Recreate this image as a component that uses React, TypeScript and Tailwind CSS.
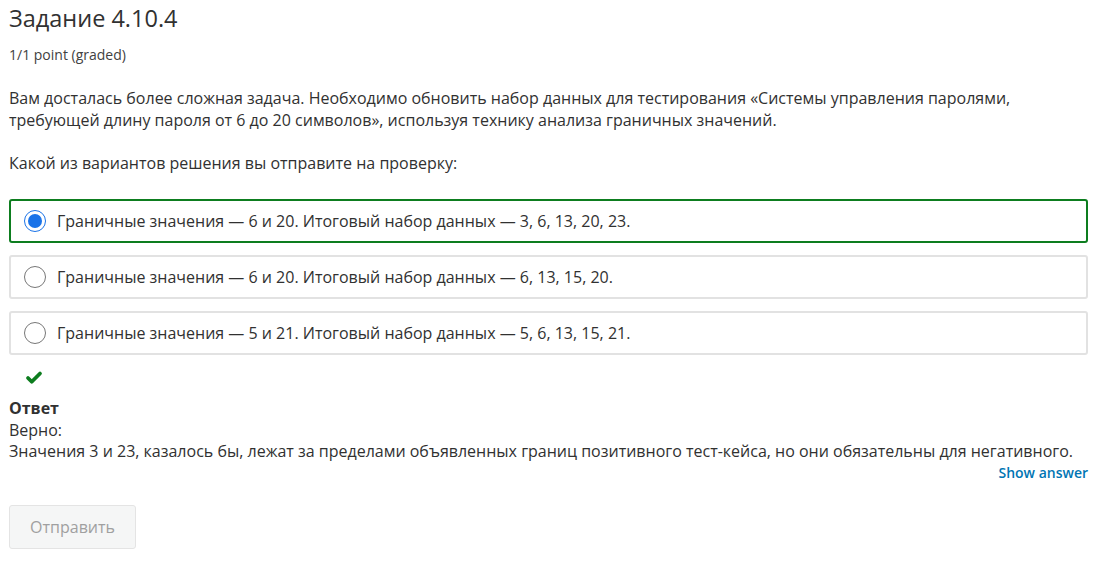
import { Check } from "lucide-react";

const options = [
  "Граничные значения — 6 и 20. Итоговый набор данных — 3, 6, 13, 20, 23.",
  "Граничные значения — 6 и 20. Итоговый набор данных — 6, 13, 15, 20.",
  "Граничные значения — 5 и 21. Итоговый набор данных — 5, 6, 13, 15, 21.",
];

const Radio = ({ checked }: { checked: boolean }) =>
  checked ? (
    <span className="flex h-[22px] w-[22px] shrink-0 items-center justify-center rounded-full border-[1.5px] border-[#1a73e8] bg-white">
      <span className="h-[14px] w-[14px] rounded-full bg-[#1a73e8]" />
    </span>
  ) : (
    <span className="h-[22px] w-[22px] shrink-0 rounded-full border-[1.5px] border-[#777] bg-white" />
  );

export default function App() {
  return (
    <div className="min-h-screen bg-white px-[9px] pr-[22px] text-[#313131] [font-family:'Open_Sans',sans-serif]">
      <h2 className="pt-[2px] text-[23.5px] leading-[32px] text-[#313131]">Задание 4.10.4</h2>
      <div className="mt-[11px] text-[14px] leading-[20px] text-[#414141]">1/1 point (graded)</div>

      <p className="mt-[22px] text-[16px] leading-[22px]">
        Вам досталась более сложная задача. Необходимо обновить набор данных для тестирования «Системы управления паролями,
        требующей длину пароля от 6 до 20 символов», используя технику анализа граничных значений.
      </p>
      <p className="mt-[21px] text-[16px] leading-[22px]">Какой из вариантов решения вы отправите на проверку:</p>

      <div className="mt-[25px] flex flex-col gap-[12px]">
        {options.map((text, i) => (
          <label
            key={i}
            className={`flex h-[44px] items-center gap-[11px] rounded-[3px] border-2 pl-[13px] text-[16px] ${
              i === 0 ? "border-[#0d7d1f]" : "border-[#e2e2e2]"
            }`}
          >
            <Radio checked={i === 0} />
            <span>{text}</span>
          </label>
        ))}
      </div>

      <div className="mt-[14px] flex pl-[16px]">
        <Check className="h-[18px] w-[18px] text-[#0d7d1f]" strokeWidth={5} />
      </div>

      <div className="mt-[11px] text-[16px] leading-[21.5px]">
        <div className="font-bold">Ответ</div>
        <div>Верно:</div>
        <div>
          Значения 3 и 23, казалось бы, лежат за пределами объявленных границ позитивного тест-кейса, но они обязательны для негативного.
        </div>
      </div>
      <div className="flex justify-end">
        <button className="text-[14px] font-semibold leading-[20px] text-[#0075b4]">Show answer</button>
      </div>

      <button className="mt-[22px] h-[44px] w-[127px] rounded-[3px] border border-[#e4e4e4] bg-[#f5f6f6] text-[16px] text-[#a0a0a0]">
        Отправить
      </button>
    </div>
  );
}
